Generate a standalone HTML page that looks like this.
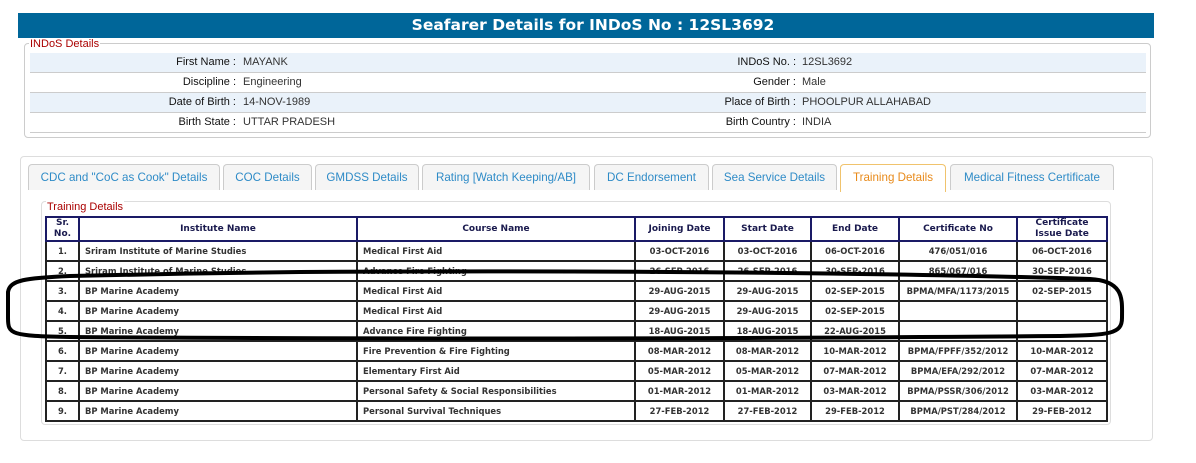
<!DOCTYPE html>
<html><head><style>
body{margin:0;width:1196px;height:463px;background:#fff;font-family:"Liberation Sans",Arial,sans-serif;position:relative;overflow:hidden}
.hdr{position:absolute;left:18px;top:13px;width:1136px;height:25px;background:#006699;color:#fff;text-align:center;font:bold 15.5px "DejaVu Sans",sans-serif;line-height:25px;text-indent:14px}
.fs1{position:absolute;left:24px;top:43px;width:1125px;height:93px;border:1px solid #ccc;border-radius:4px}
.lg{position:absolute;background:#fff;color:#a00;font-size:11px;padding:0 1px;line-height:12px}
.row{position:absolute;left:5px;width:1116px;height:19px;border-bottom:1px solid #ccc;font-size:11px;line-height:19px;color:#333}
.row.a{background:#eaf2fa}
.row span{position:absolute}
.l{text-align:right;color:#111}
.pan{position:absolute;left:20px;top:156px;width:1131px;height:283px;border:1px solid #ddd;border-radius:4px}
.tab{position:absolute;top:164px;height:25px;border:1px solid #ccc;border-bottom:none;border-radius:4px 4px 0 0;background:#f5f5f5;color:#2e8bc7;font-size:11.6px;line-height:26px;text-align:center}
.tab.on{background:#fff;border-color:#f0c36d;color:#e88a1a;height:27px}
.fs2{position:absolute;left:41px;top:201px;width:1068px;height:222px;border:1px solid #ddd;border-radius:4px}
table{position:absolute;left:45px;top:216px;width:1062px;table-layout:fixed;border-collapse:collapse;font:bold 8.4px "DejaVu Sans",Verdana,sans-serif;color:#333}
td,th{border:2px solid #222;height:18px;padding:0 5px;white-space:nowrap;overflow:hidden}
th{border-color:#1a1a66;color:#1a1a4e;height:22px;font-size:9px;line-height:11px}
td.c{text-align:center}
</style></head><body>
<div class="hdr">Seafarer Details for INDoS No : 12SL3692</div>
<div class="fs1">
<div class="row a" style="top:9px"><span class="l" style="right:910px">First Name :</span><span style="left:213px">MAYANK</span><span class="l" style="right:350px">INDoS No. :</span><span style="left:772px">12SL3692</span></div>
<div class="row" style="top:29px"><span class="l" style="right:910px">Discipline :</span><span style="left:213px">Engineering</span><span class="l" style="right:350px">Gender :</span><span style="left:772px">Male</span></div>
<div class="row a" style="top:49px"><span class="l" style="right:910px">Date of Birth :</span><span style="left:213px">14-NOV-1989</span><span class="l" style="right:350px">Place of Birth :</span><span style="left:772px">PHOOLPUR ALLAHABAD</span></div>
<div class="row" style="top:69px"><span class="l" style="right:910px">Birth State :</span><span style="left:213px">UTTAR PRADESH</span><span class="l" style="right:350px">Birth Country :</span><span style="left:772px">INDIA</span></div>
</div>
<div class="lg" style="left:29px;top:38px">INDoS Details</div>
<div class="pan"></div>
<div class="tab" style="left:28px;width:190px">CDC and "CoC as Cook" Details</div>
<div class="tab" style="left:223px;width:87px">COC Details</div>
<div class="tab" style="left:315px;width:102px">GMDSS Details</div>
<div class="tab" style="left:422px;width:166px">Rating [Watch Keeping/AB]</div>
<div class="tab" style="left:594px;width:113px">DC Endorsement</div>
<div class="tab" style="left:712px;width:123px">Sea Service Details</div>
<div class="tab on" style="left:840px;width:104px">Training Details</div>
<div class="tab" style="left:950px;width:162px">Medical Fitness Certificate</div>
<div class="fs2"></div>
<div class="lg" style="left:46px;top:201px">Training Details</div>
<table>
<colgroup><col style="width:33px"><col style="width:278px"><col style="width:278px"><col style="width:89px"><col style="width:87px"><col style="width:88px"><col style="width:118px"><col style="width:90px"></colgroup>
<tr><th>Sr.<br>No.</th><th>Institute Name</th><th>Course Name</th><th>Joining Date</th><th>Start Date</th><th>End Date</th><th>Certificate No</th><th>Certificate<br>Issue Date</th></tr>
<tr><td class="c">1.</td><td>Sriram Institute of Marine Studies</td><td>Medical First Aid</td><td class="c">03-OCT-2016</td><td class="c">03-OCT-2016</td><td class="c">06-OCT-2016</td><td class="c">476/051/016</td><td class="c">06-OCT-2016</td></tr>
<tr><td class="c">2.</td><td>Sriram Institute of Marine Studies</td><td>Advance Fire Fighting</td><td class="c">26-SEP-2016</td><td class="c">26-SEP-2016</td><td class="c">30-SEP-2016</td><td class="c">865/067/016</td><td class="c">30-SEP-2016</td></tr>
<tr><td class="c">3.</td><td>BP Marine Academy</td><td>Medical First Aid</td><td class="c">29-AUG-2015</td><td class="c">29-AUG-2015</td><td class="c">02-SEP-2015</td><td class="c">BPMA/MFA/1173/2015</td><td class="c">02-SEP-2015</td></tr>
<tr><td class="c">4.</td><td>BP Marine Academy</td><td>Medical First Aid</td><td class="c">29-AUG-2015</td><td class="c">29-AUG-2015</td><td class="c">02-SEP-2015</td><td></td><td></td></tr>
<tr><td class="c">5.</td><td>BP Marine Academy</td><td>Advance Fire Fighting</td><td class="c">18-AUG-2015</td><td class="c">18-AUG-2015</td><td class="c">22-AUG-2015</td><td></td><td></td></tr>
<tr><td class="c">6.</td><td>BP Marine Academy</td><td>Fire Prevention &amp; Fire Fighting</td><td class="c">08-MAR-2012</td><td class="c">08-MAR-2012</td><td class="c">10-MAR-2012</td><td class="c">BPMA/FPFF/352/2012</td><td class="c">10-MAR-2012</td></tr>
<tr><td class="c">7.</td><td>BP Marine Academy</td><td>Elementary First Aid</td><td class="c">05-MAR-2012</td><td class="c">05-MAR-2012</td><td class="c">07-MAR-2012</td><td class="c">BPMA/EFA/292/2012</td><td class="c">07-MAR-2012</td></tr>
<tr><td class="c">8.</td><td>BP Marine Academy</td><td>Personal Safety &amp; Social Responsibilities</td><td class="c">01-MAR-2012</td><td class="c">01-MAR-2012</td><td class="c">03-MAR-2012</td><td class="c">BPMA/PSSR/306/2012</td><td class="c">03-MAR-2012</td></tr>
<tr><td class="c">9.</td><td>BP Marine Academy</td><td>Personal Survival Techniques</td><td class="c">27-FEB-2012</td><td class="c">27-FEB-2012</td><td class="c">29-FEB-2012</td><td class="c">BPMA/PST/284/2012</td><td class="c">29-FEB-2012</td></tr>
</table>
<svg style="position:absolute;left:0;top:0" width="1196" height="463">
<path d="M300,272 C600,270 900,273 1090,279 C1125,281 1122,300 1122,318 C1122,334 1110,335 1060,336 C800,338 500,340 70,337 C10,336 8,334 8,318 L8,292 C10,280 25,278 70,276 C150,274 220,273 300,272" fill="none" stroke="#000" stroke-width="4"/>
</svg>
</body></html>
